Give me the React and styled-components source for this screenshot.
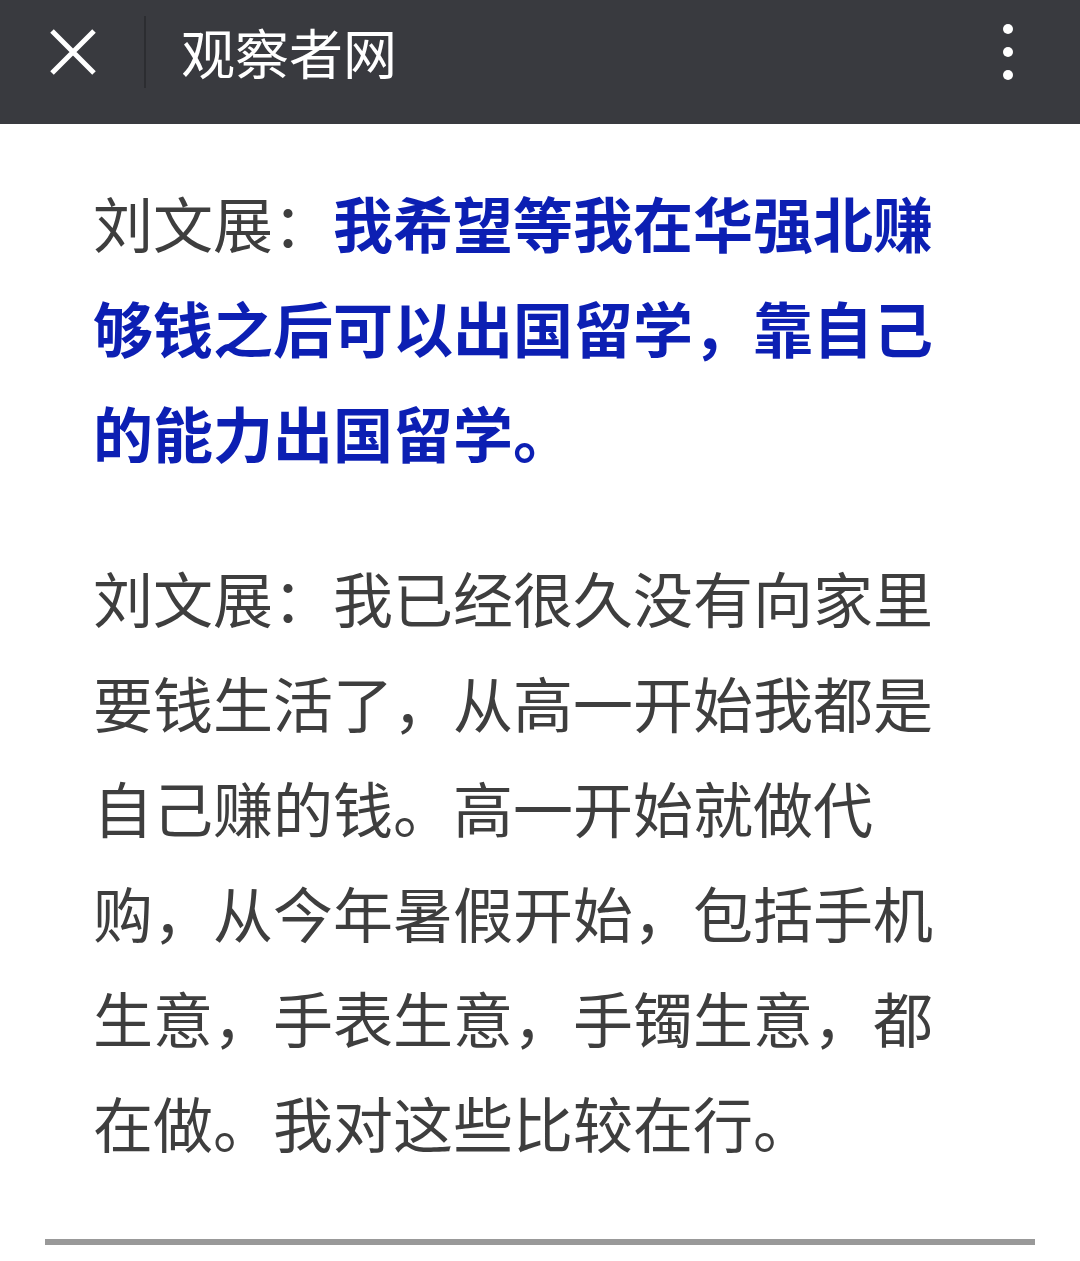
import styled, { createGlobalStyle } from "styled-components"

const Global = createGlobalStyle`
    body {
        margin: 0;
        background: #fff;
        font-family: "Noto Sans CJK SC", "Noto Sans", sans-serif;
    }
`

const Header = styled.header`
    height: 124px;
    background: #393a3f;
    box-sizing: border-box;
    padding-bottom: 20px;
    display: flex;
    align-items: center;
`

const Close = styled.button`
    margin-left: 46px;
    width: 54px;
    height: 54px;
    padding: 0;
    border: 0;
    background: none;
    display: flex;
    align-items: center;
    justify-content: center;
`

const Divider = styled.span`
    width: 2px;
    height: 72px;
    margin-left: 44px;
    background: #2c2d31;
`

const Title = styled.h1`
    margin: 0 0 0 35px;
    flex: 1;
    color: #fff;
    font-size: 54px;
    font-weight: 400;
    line-height: 1;
`

const Menu = styled.button`
    margin-right: 67px;
    padding: 0;
    border: 0;
    background: none;
    display: flex;
    flex-direction: column;
    gap: 13px;
`

const Dot = styled.span`
    width: 10px;
    height: 10px;
    border-radius: 50%;
    background: #fff;
`

const Article = styled.main`
    padding: 45px 0 0 93px;
`

const Para = styled.p`
    width: 842px;
    margin: 0 0 60px;
    font-size: 60px;
    line-height: 105px;
    color: #3e3e3e;
`

const Strong = styled.strong`
    color: #0c1fb3;
    font-weight: 700;
`

const Rule = styled.hr`
    margin: 65px 45px 0;
    border: 0;
    height: 6px;
    background: #999;
`

const App = () => (
    <>
        <Global />
        <Header>
            <Close aria-label="关闭">
                <svg width="48" height="48" viewBox="0 0 48 48">
                    <path d="M3 3 L45 45 M45 3 L3 45" stroke="#fff" strokeWidth="5" />
                </svg>
            </Close>
            <Divider />
            <Title>观察者网</Title>
            <Menu aria-label="更多">
                <Dot />
                <Dot />
                <Dot />
            </Menu>
        </Header>
        <Article>
            <Para>
                刘文展：<Strong>我希望等我在华强北赚够钱之后可以出国留学，靠自己的能力出国留学。</Strong>
            </Para>
            <Para>
                刘文展：我已经很久没有向家里要钱生活了，从高一开始我都是自己赚的钱。高一开始就做代购，从今年暑假开始，包括手机生意，手表生意，手镯生意，都在做。我对这些比较在行。
            </Para>
        </Article>
        <Rule />
    </>
)

export default App
